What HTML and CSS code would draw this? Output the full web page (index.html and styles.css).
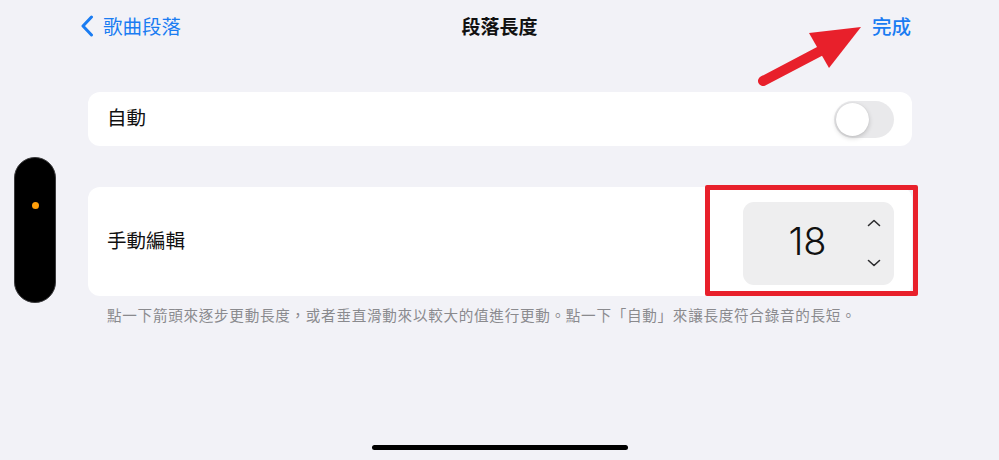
FILE: index.html
```html
<!DOCTYPE html>
<html lang="zh-Hant">
<head>
<meta charset="UTF-8" />
<meta name="viewport" content="width=device-width, initial-scale=1" />
<title>段落長度</title>
<link rel="stylesheet" href="styles.css">
</head>
<body>
<div class="side-pill"><span class="dot"></span></div>

<nav class="navbar">
  <a class="back" href="#">
    <svg class="back-chevron" width="14" height="22" viewBox="0 0 14 22" aria-hidden="true">
      <path d="M11.5 2 L3 11 L11.5 20" fill="none" stroke="#1a7cf2" stroke-width="3" stroke-linecap="round" stroke-linejoin="round"/>
    </svg>
    <span>歌曲段落</span>
  </a>
  <h1 class="title">段落長度</h1>
  <a class="done" href="#">完成</a>
</nav>

<main class="content">
  <section class="card row-auto">
    <span class="label">自動</span>
    <span class="toggle"><span class="knob"></span></span>
  </section>

  <section class="card row-manual">
    <span class="label">手動編輯</span>
    <div class="stepper">
      <span class="value">18</span>
      <div class="arrows">
        <svg width="16" height="10" viewBox="0 0 16 10" aria-hidden="true">
          <path d="M2.5 7.5 L8 2.5 L13.5 7.5" fill="none" stroke="#2c2c2e" stroke-width="1.6" stroke-linecap="round" stroke-linejoin="round"/>
        </svg>
        <svg width="16" height="10" viewBox="0 0 16 10" aria-hidden="true">
          <path d="M2.5 2.5 L8 7.5 L13.5 2.5" fill="none" stroke="#2c2c2e" stroke-width="1.6" stroke-linecap="round" stroke-linejoin="round"/>
        </svg>
      </div>
    </div>
  </section>

  <p class="hint">點一下箭頭來逐步更動長度，或者垂直滑動來以較大的值進行更動。點一下「自動」來讓長度符合錄音的長短。</p>
</main>

<!-- annotation overlays -->
<svg class="arrow" width="120" height="70" viewBox="750 20 120 70" aria-hidden="true">
  <line x1="763" y1="81" x2="826" y2="48" stroke="#e8202b" stroke-width="10" stroke-linecap="round"/>
  <polygon points="809,33 861,27 829,68" fill="#e8202b"/>
</svg>
<div class="highlight"></div>

<div class="home-indicator"></div>
</body>
</html>
```

FILE: styles.css
```css
* {
  box-sizing: border-box;
}
body {
  margin: 0;
  width: 999px;
  height: 460px;
  overflow: hidden;
  background: #f2f2f7;
  font-family: "Noto Sans CJK TC", "Noto Sans", sans-serif;
  color: #111;
  position: relative;
}
a {
  text-decoration: none;
}

/* Navigation bar */
.navbar {
  display: flex;
  align-items: center;
  justify-content: space-between;
  height: 50px;
  padding: 0 88px 0 80px;
  position: relative;
}
.back {
  display: flex;
  align-items: center;
  gap: 9px;
  color: #1a7cf2;
  font-size: 19.5px;
}
.back-chevron {
  margin-top: 1px;
}
.title {
  position: absolute;
  left: 0;
  right: 0;
  margin: 0;
  text-align: center;
  font-size: 19px;
  font-weight: 700;
  pointer-events: none;
}
.done {
  color: #1a7cf2;
  font-size: 19.5px;
  font-weight: 500;
}

/* Content */
.content {
  margin: 42px 87px 0 88px;
}
.card {
  background: #fff;
  border-radius: 12px;
  display: flex;
  align-items: center;
  justify-content: space-between;
  padding: 0 18px 0 19px;
}
.label {
  font-size: 19.5px;
  line-height: 1;
  padding-bottom: 4px;
}
.row-auto {
  height: 54px;
}
.toggle {
  width: 60px;
  height: 37px;
  border-radius: 19px;
  background: #e9e9eb;
  padding: 2px;
  display: flex;
}
.knob {
  width: 33px;
  height: 33px;
  border-radius: 50%;
  background: #fff;
  box-shadow: 0 2px 5px rgba(0,0,0,0.18), 0 0 1px rgba(0,0,0,0.12);
}
.row-manual {
  margin-top: 41px;
  height: 109px;
}
.stepper {
  width: 151px;
  height: 83px;
  margin-top: 3px;
  background: #eeeeef;
  border-radius: 11px;
  display: flex;
  align-items: center;
  padding: 0 6px 0 12px;
}
.value {
  flex: 1;
  text-align: center;
  font-family: "Inter", sans-serif;
  font-weight: 300;
  font-size: 38px;
  line-height: 1;
  padding-bottom: 4px;
  color: #111;
}
.arrows {
  width: 28px;
  display: flex;
  flex-direction: column;
  align-items: center;
  gap: 30px;
}
.arrows svg {
  display: block;
}
.hint {
  margin: 8px 0 0 19px;
  font-size: 14.6px;
  letter-spacing: 0.7px;
  color: #8a8a8e;
  white-space: nowrap;
}

/* Overlays */
.side-pill {
  position: absolute;
  left: 14px;
  top: 157px;
  width: 42px;
  height: 146px;
  border-radius: 21px;
  background: #000;
  border: 1px solid #3a3a3c;
}
.dot {
  position: absolute;
  left: 17px;
  top: 44px;
  width: 7px;
  height: 7px;
  border-radius: 50%;
  background: #ff9f0a;
}
.arrow {
  position: absolute;
  left: 750px;
  top: 20px;
}
.highlight {
  position: absolute;
  left: 705px;
  top: 185px;
  width: 213px;
  height: 111px;
  border: 5px solid #e8202b;
  border-radius: 2px;
}
.home-indicator {
  position: absolute;
  left: 372px;
  top: 445px;
  width: 256px;
  height: 5px;
  border-radius: 3px;
  background: #000;
}
```
